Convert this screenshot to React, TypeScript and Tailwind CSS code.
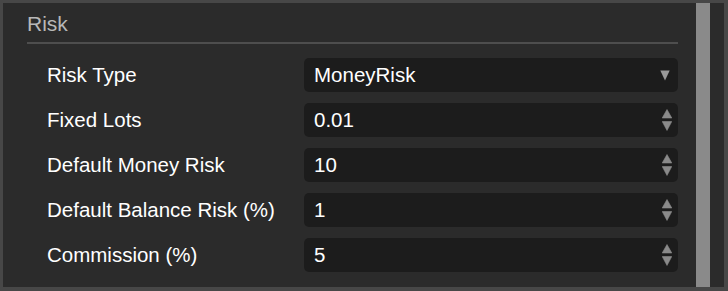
import React from "react";

const rows = [
  { label: "Risk Type", value: "MoneyRisk", kind: "select" },
  { label: "Fixed Lots", value: "0.01", kind: "number" },
  { label: "Default Money Risk", value: "10", kind: "number" },
  { label: "Default Balance Risk (%)", value: "1", kind: "number" },
  { label: "Commission (%)", value: "5", kind: "number" },
];

function Spinner() {
  return (
    <svg width="10" height="22" viewBox="0 0 10 22" className="shrink-0">
      <path d="M5 0.5 L9.8 9 L0.2 9 Z" fill="#8a8a8a" strokeLinejoin="round" stroke="#8a8a8a" strokeWidth="0.6" />
      <path d="M0.2 12.5 L9.8 12.5 L5 21.5 Z" fill="#8a8a8a" strokeLinejoin="round" stroke="#8a8a8a" strokeWidth="0.6" />
    </svg>
  );
}

function Caret() {
  return (
    <svg width="10" height="11" viewBox="0 0 10 11" className="shrink-0">
      <path d="M0.3 0.5 L9.7 0.5 L5 10.5 Z" fill="#9a9a9a" />
    </svg>
  );
}

export default function App() {
  return (
    <div
      className="w-[728px] h-[291px] bg-[#474747] pt-[3px] pl-[3px] pr-[4px] pb-[4px]"
      style={{ fontFamily: '"Liberation Sans", Arial, sans-serif' }}
    >
      <div className="flex h-full bg-[#2b2b2b]">
        <div className="flex-1 pl-[24px] pr-[18px]">
          <div className="pt-[9px] h-[39px] text-[21px] leading-[24px] text-[#b8b8b8]">Risk</div>
          <div className="h-[2px] bg-[#4e4e4e]" />
          <div className="flex flex-col gap-[11px] pt-[14px] pl-[20px]">
            {rows.map((r) => (
              <div key={r.label} className="flex items-center h-[34px]">
                <div className="w-[257px] text-[20.5px] text-white">{r.label}</div>
                <div className="flex-1 h-full flex items-center justify-between bg-[#1c1c1c] rounded-[5px] pl-[10px] pr-[6px] text-[20.5px] text-white">
                  <span>{r.value}</span>
                  {r.kind === "select" ? (
                    <span className="pr-[2px] flex">
                      <Caret />
                    </span>
                  ) : (
                    <Spinner />
                  )}
                </div>
              </div>
            ))}
          </div>
        </div>
        <div className="w-[14px] bg-[#8a8a8a]" />
        <div className="w-[14px]" />
      </div>
    </div>
  );
}
